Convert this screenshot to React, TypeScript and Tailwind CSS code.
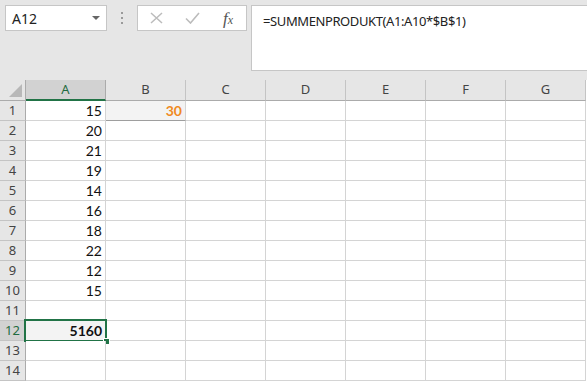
import React from "react"

const cols = ["A", "B", "C", "D", "E", "F", "G"]
const values: Record<number, string> = {
  1: "15",
  2: "20",
  3: "21",
  4: "19",
  5: "14",
  6: "16",
  7: "18",
  8: "22",
  9: "12",
  10: "15",
}

function FormulaBar() {
  return (
    <div className="flex items-start h-[80px] bg-[#e6e6e6] pt-[5px] pl-[5px]">
      {/* name box */}
      <div className="relative flex items-center w-[102px] h-[26px] bg-white border border-[#c6c6c6] pl-[6px] text-[14px] text-[#222] font-['Noto_Sans',sans-serif]">
        A12
        <div className="absolute right-[6px] top-[10px] w-0 h-0 border-l-[4px] border-l-transparent border-r-[4px] border-r-transparent border-t-[4px] border-t-[#666]"></div>
      </div>

      {/* grip dots */}
      <div className="flex flex-col gap-[3px] ml-[14px] mt-[7px] w-[2px]">
        <div className="w-[2px] h-[2px] bg-[#9a9a9a]"></div>
        <div className="w-[2px] h-[2px] bg-[#9a9a9a]"></div>
        <div className="w-[2px] h-[2px] bg-[#9a9a9a]"></div>
      </div>

      {/* cancel / enter / fx */}
      <div className="flex items-center ml-[14px] w-[110px] h-[26px] bg-white border border-[#c6c6c6]">
        <svg width="13" height="12" viewBox="0 0 13 12" className="ml-[12px]">
          <path d="M1 1 L12 11 M12 1 L1 11" stroke="#bcbcbc" strokeWidth="1.5" fill="none" />
        </svg>
        <svg width="15" height="12" viewBox="0 0 15 12" className="ml-[22px]">
          <path d="M1 6.5 L5.5 11 L14 1" stroke="#bcbcbc" strokeWidth="1.6" fill="none" />
        </svg>
        <span className="ml-[23px] text-[#555] italic font-['Liberation_Serif',serif] text-[17px] leading-none">
          f<span className="text-[12px]">x</span>
        </span>
      </div>

      {/* formula input */}
      <div className="flex-1 h-[66px] ml-[4px] bg-white border border-[#c6c6c6] border-r-0 pl-[11px] pt-[6px] text-[13px] text-[#222] font-['Noto_Sans',sans-serif] tracking-[-0.4px]">
        =SUMMENPRODUKT(A1:A10*$B$1)
      </div>
    </div>
  )
}

function HeaderRow() {
  return (
    <div className="flex h-[21px] font-['Noto_Sans',sans-serif] text-[13px]">
      <div className="relative w-[26px] h-full bg-[#e6e6e6] border-r border-b border-[#ababab]">
        <div className="absolute right-[3px] bottom-[3px] w-0 h-0 border-l-[13px] border-l-transparent border-b-[13px] border-b-[#b8b8b8]"></div>
      </div>
      {cols.map((c) =>
        c === "A" ? (
          <div
            key={c}
            className="flex items-center justify-center w-[80px] h-full bg-[#d2d2d2] border-r border-[#ababab] border-b-2 border-b-[#217346] text-[#1e6b40]"
          >
            {c}
          </div>
        ) : (
          <div
            key={c}
            className="flex items-center justify-center w-[80px] h-full bg-[#e6e6e6] border-r border-r-[#c4c4c4] border-b border-b-[#ababab] text-[#444]"
          >
            {c}
          </div>
        )
      )}
    </div>
  )
}

function Row({ n }: { n: number }) {
  const selected = n === 12
  return (
    <div className="flex h-[20px]">
      <div
        className={`flex items-center justify-center w-[26px] h-full border-r border-b font-['Noto_Sans',sans-serif] text-[13px] ${
          selected
            ? "bg-[#d2d2d2] border-r-[#ababab] border-b-[#c4c4c4] text-[#1e6b40]"
            : "bg-[#e6e6e6] border-r-[#ababab] border-b-[#c4c4c4] text-[#444]"
        }`}
      >
        {n}
      </div>
      {/* column A */}
      <div
        className={`relative flex items-center justify-end w-[80px] h-full border-r border-b border-[#d4d4d4] pr-[3px] text-[14px] font-['Lato',sans-serif] text-[#111] ${
          selected ? "bg-[#f3f3f3] font-bold" : "bg-white"
        }`}
      >
        {selected ? "5160" : values[n] ?? ""}
        {selected && (
          <>
            <div className="absolute -left-[2px] -top-[2px] -right-[2px] -bottom-[2px] border-2 border-[#217346]"></div>
            <div className="absolute -right-[5px] -bottom-[5px] w-[7px] h-[7px] bg-[#217346] border border-white"></div>
          </>
        )}
      </div>
      {/* column B */}
      {n === 1 ? (
        <div className="flex items-center justify-end w-[80px] h-full bg-[#f3f3f3] border-r border-r-[#d4d4d4] border-b border-b-[#9e9e9e] pr-[3px] text-[14px] font-bold font-['Lato',sans-serif] text-[#f08a1e]">
          30
        </div>
      ) : (
        <div className="w-[80px] h-full bg-white border-r border-b border-[#d4d4d4]"></div>
      )}
      {cols.slice(2).map((c) => (
        <div key={c} className="w-[80px] h-full bg-white border-r border-b border-[#d4d4d4]"></div>
      ))}
    </div>
  )
}

export default function App() {
  const rows = Array.from({ length: 14 }, (_, i) => i + 1)
  return (
    <div className="w-[587px] h-[382px] overflow-hidden bg-white">
      <FormulaBar />
      <HeaderRow />
      {rows.map((n) => (
        <Row key={n} n={n} />
      ))}
    </div>
  )
}
